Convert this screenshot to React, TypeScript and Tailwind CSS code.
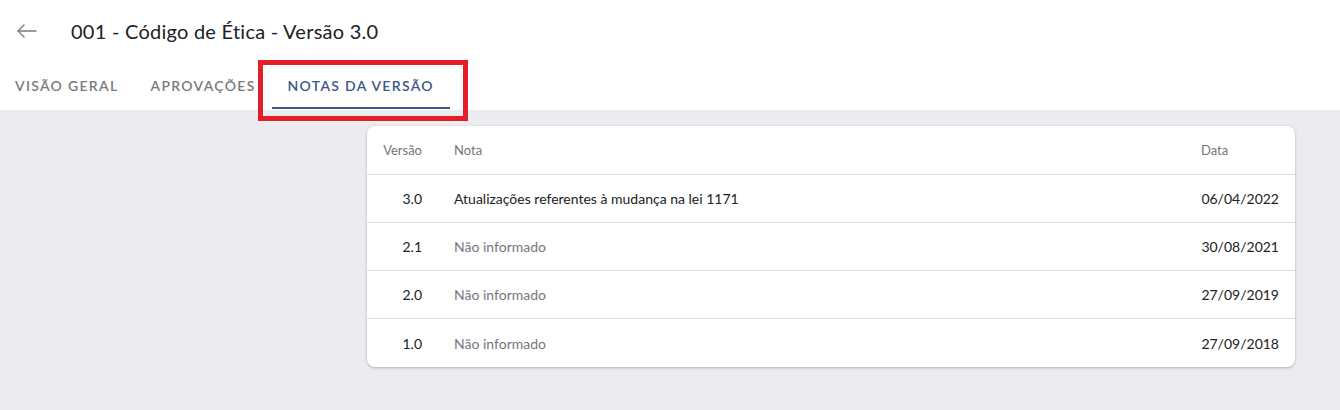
import React from "react";

const rows = [
  { v: "3.0", n: "Atualizações referentes à mudança na lei 1171", d: "06/04/2022", real: true },
  { v: "2.1", n: "Não informado", d: "30/08/2021", real: false },
  { v: "2.0", n: "Não informado", d: "27/09/2019", real: false },
  { v: "1.0", n: "Não informado", d: "27/09/2018", real: false },
];

export default function App() {
  return (
    <div className="w-[1340px] h-[410px] bg-[#ebebf0] overflow-hidden" style={{ fontFamily: "Lato, 'Noto Sans', sans-serif" }}>
      <div className="bg-white pb-[1px]">
        <div className="h-[61px] flex items-center">
          <div className="w-[71px] flex items-center pl-[17px]">
            <svg width="20" height="14" viewBox="0 0 20 14" fill="none" stroke="#7a7a7a" strokeWidth="1.3" strokeLinecap="round" strokeLinejoin="round">
              <path d="M1 7H19" />
              <path d="M7 1L1 7L7 13" />
            </svg>
          </div>
          <h1 className="text-[20px] text-[#212121] font-normal tracking-[0.25px]">001 - Código de Ética - Versão 3.0</h1>
        </div>
        <div className="h-12 flex ml-[-1px] text-[14px] font-semibold tracking-[1.3px] uppercase">
          <div className="px-4 flex items-center text-[#7a7a7a]">Visão Geral</div>
          <div className="px-4 flex items-center text-[#7a7a7a]">Aprovações</div>
          <div className="px-4 flex items-center text-[#3d5687] relative">
            Notas da Versão
            <div className="absolute left-0 right-0 bottom-0 h-[2px] bg-[#3f5a92]" />
            <div className="absolute left-[-14px] right-[-18px] top-[-1px] bottom-[-12px] border-[5px] border-[#e31e27] z-10" />
          </div>
        </div>
      </div>
      <div className="pt-4 pl-[367px]">
        <div className="w-[928px] bg-white rounded-lg pt-[1px] shadow-[0_1px_3px_rgba(0,0,0,0.25)]">
          <div className="h-12 flex items-center text-[13px] text-[#757575] border-b border-[#e0e0e0]">
            <div className="w-[71px] px-4 text-right">Versão</div>
            <div className="flex-1 px-4">Nota</div>
            <div className="w-[110px] px-4 text-left">Data</div>
          </div>
          {rows.map((r, i) => (
            <div key={r.v} className={`h-12 flex items-center text-[14px] ${i < rows.length - 1 ? "border-b border-[#e0e0e0]" : ""}`}>
              <div className="w-[71px] px-4 text-right text-[#212121]">{r.v}</div>
              <div className={`flex-1 px-4 ${r.real ? "text-[#212121]" : "text-[#76767f]"}`}>{r.n}</div>
              <div className="w-[110px] px-4 text-right text-[#212121]">{r.d}</div>
            </div>
          ))}
        </div>
      </div>
    </div>
  );
}
